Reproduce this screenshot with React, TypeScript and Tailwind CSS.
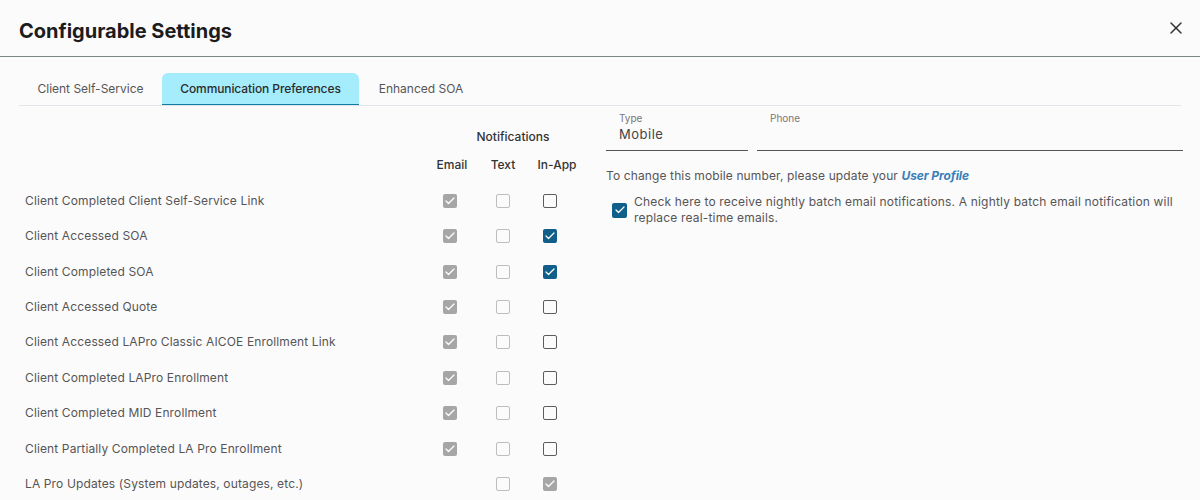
import React from 'react';
import { X, Check } from 'lucide-react';

type BoxState = 'grayChecked' | 'disabled' | 'empty' | 'checked' | 'none';

const rows: { label: string; boxes: BoxState[] }[] = [
  { label: 'Client Completed Client Self-Service Link', boxes: ['grayChecked', 'disabled', 'empty'] },
  { label: 'Client Accessed SOA', boxes: ['grayChecked', 'disabled', 'checked'] },
  { label: 'Client Completed SOA', boxes: ['grayChecked', 'disabled', 'checked'] },
  { label: 'Client Accessed Quote', boxes: ['grayChecked', 'disabled', 'empty'] },
  { label: 'Client Accessed LAPro Classic AICOE Enrollment Link', boxes: ['grayChecked', 'disabled', 'empty'] },
  { label: 'Client Completed LAPro Enrollment', boxes: ['grayChecked', 'disabled', 'empty'] },
  { label: 'Client Completed MID Enrollment', boxes: ['grayChecked', 'disabled', 'empty'] },
  { label: 'Client Partially Completed LA Pro Enrollment', boxes: ['grayChecked', 'disabled', 'empty'] },
  { label: 'LA Pro Updates (System updates, outages, etc.)', boxes: ['none', 'disabled', 'grayChecked'] },
];

const Box = ({ state }: { state: BoxState }) => {
  if (state === 'none') return <span className="block h-[14px] w-[14px]" />;
  if (state === 'disabled') return <span className="block h-[14px] w-[14px] rounded-[2px] border border-[#bdbdbd] bg-[#fcfbfc]" />;
  if (state === 'empty') return <span className="block h-[14px] w-[14px] rounded-[2px] border border-[#5c5c5c] bg-[#fcfbfc]" />;
  return (
    <span className={`flex h-[14px] w-[14px] items-center justify-center rounded-[2px] ${state === 'checked' ? 'bg-[#0f5f8a]' : 'bg-[#a6a6a6]'}`}>
      <Check className="h-3 w-3 text-white" strokeWidth={2.5} />
    </span>
  );
};

export default function App() {
  return (
    <div className="h-[500px] w-[1200px] overflow-hidden bg-[#fcfbfc] font-['Inter',sans-serif] text-[#555555]">
      {/* Header */}
      <div className="flex h-[57px] items-center justify-between border-b border-[#7d8587] pl-[19px] pr-[14px]">
        <h1 className="pt-[5px] text-[20px] font-bold text-[#1c1c1c]">Configurable Settings</h1>
        <X className="h-[20px] w-[20px] text-[#333333]" strokeWidth={1.75} />
      </div>

      {/* Tabs */}
      <div className="mx-[19px] mt-[16px] flex h-[33px] border-b border-[#e1e5ea] text-[12px]">
        <div className="flex w-[143px] items-center justify-center">Client Self-Service</div>
        <div className="flex w-[197px] items-center justify-center rounded-t-[6px] border-b border-[#0f7ca0] bg-[#a5ecfd] font-medium tracking-[-0.1px] text-[#2b2b2b]">
          Communication Preferences
        </div>
        <div className="flex w-[124px] items-center justify-center">Enhanced SOA</div>
      </div>

      <div className="flex">
        {/* Notification table */}
        <div className="w-[606px] shrink-0 pl-[25px]">
          <div className="ml-[402px] w-[160px] pt-[23px] text-[12px] font-medium text-[#333333]">
            <div className="flex h-[16px] items-center justify-center pl-[12px]">Notifications</div>
            <div className="mt-[11px] grid h-[16px] grid-cols-[50px_52px_56px] items-center text-center">
              <span>Email</span>
              <span>Text</span>
              <span>In-App</span>
            </div>
          </div>
          <div className="mt-[11px]">
            {rows.map((row) => (
              <div key={row.label} className="flex h-[35.45px] items-center text-[12px] tracking-[0.13px]">
                <span className="w-[418px] shrink-0">{row.label}</span>
                <div className="grid grid-cols-[53px_47px_14px]">
                  {row.boxes.map((state, i) => (
                    <Box key={i} state={state} />
                  ))}
                </div>
              </div>
            ))}
          </div>
        </div>

        {/* Phone details */}
        <div className="w-[577px] shrink-0">
          <div className="flex gap-[9px] pt-[6px]">
            <div className="h-[39px] w-[142px] border-b border-[#555555] pl-[13px]">
              <div className="text-[10px] leading-[12px] text-[#777777]">Type</div>
              <div className="mt-[1px] text-[13px] leading-[18px] tracking-[0.5px] text-[#444444]">Mobile</div>
            </div>
            <div className="h-[39px] flex-1 border-b border-[#555555] pl-[13px]">
              <div className="text-[10px] leading-[12px] text-[#777777]">Phone</div>
            </div>
          </div>
          <p className="mt-[17px] text-[12px] leading-[16px] tracking-[0.12px]">
            To change this mobile number, please update your{' '}
            <a className="font-bold italic tracking-[-0.1px] text-[#3a7fb8]">User Profile</a>
          </p>
          <div className="mt-[10px] flex items-center gap-[7px] pl-[6px]">
            <span className="flex h-[15px] w-[15px] shrink-0 items-center justify-center rounded-[2px] bg-[#0f5f8a]">
              <Check className="h-3 w-3 text-white" strokeWidth={2.5} />
            </span>
            <p className="text-[12px] leading-[16px] tracking-[0.18px]">
              Check here to receive nightly batch email notifications. A nightly batch email notification will replace real-time emails.
            </p>
          </div>
        </div>
      </div>
    </div>
  );
}
